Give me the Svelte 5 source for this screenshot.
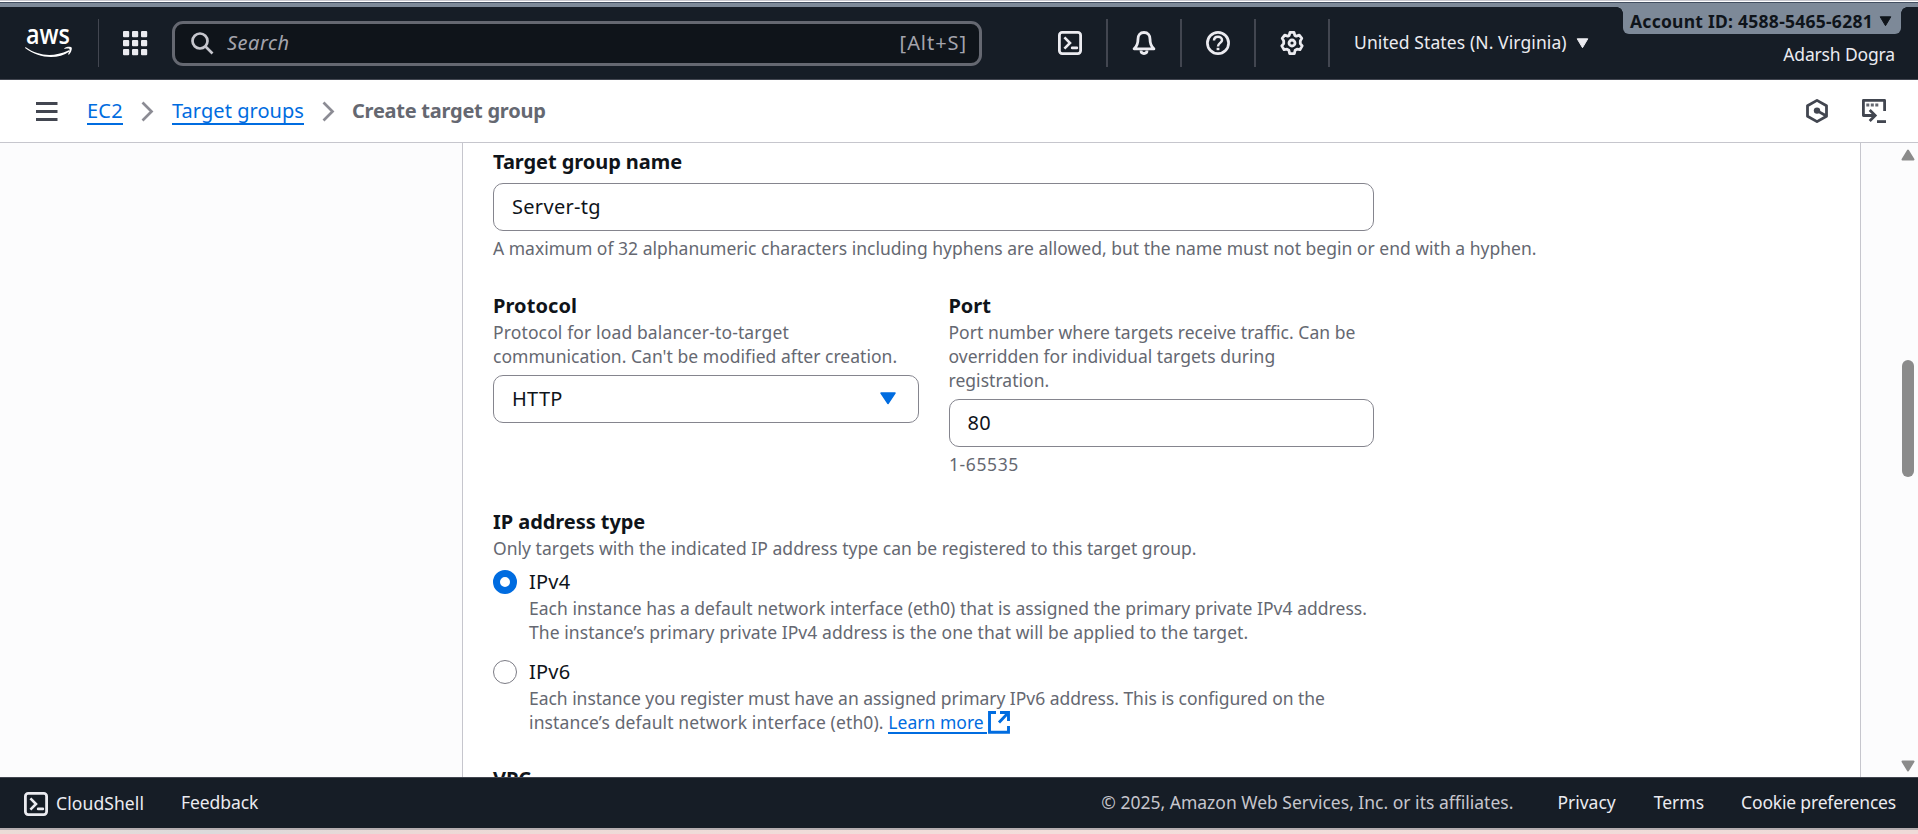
<script>
  let groupName = $state('Server-tg');
  let port = $state('80');
  let ipType = $state('ipv4');
  const dots = [0, 9, 18];
</script>

{#snippet shellIcon()}
  <svg class="icon" width="24" height="24" viewBox="0 0 24 24" fill="none" stroke="#ebebf0" stroke-width="2.8">
    <rect x="1.4" y="1.4" width="21.2" height="21.2" rx="2.8" />
    <path d="M6.4 6.4 12 12l-5.600 5.600" stroke-width="2.600" />
    <path d="M14.200 16.900h4.600" stroke-width="2.800" stroke-linecap="round" />
  </svg>
{/snippet}

<div class="page">
  <div class="edge"></div>
  <header>
    <svg class="logo" width="49" height="34" viewBox="0 0 49 34" fill="none">
      <text x="1" y="16.700" textLength="44" lengthAdjust="spacingAndGlyphs" class="logo-text">aws</text>
      <path d="M.8 20.200c13 9.200 28 10 42.500 3.200.9-.4 1.600.6.8 1.300C33.500 32.500 14 32 .4 21.300c-.6-.6-.1-1.300.4-1.100Z" fill="#fff" />
      <path d="M39.300 21.200c2.600-1.900 6.700-1.700 7.300-.8.700.9-.2 5-2.700 7.300l-.8-.4c.7-1.700 1.900-4.700 1.400-5.300-.5-.7-3.300-.4-5-.1Z" fill="#fff" />
    </svg>
    <span class="bar first"></span>
    <svg class="apps" width="24" height="24" viewBox="0 0 24 24" fill="#ebebf0">
      {#each dots as y}{#each dots as x}<rect {x} {y} width="6.200" height="6.200" rx="1" />{/each}{/each}
    </svg>
    <div class="search">
      <svg width="23" height="23" viewBox="0 0 23 23" fill="none" stroke="#c6c6cd" stroke-width="2.700">
        <circle cx="9" cy="9" r="7.500" /><path d="m14.500 14.500 7 7" />
      </svg>
      <span class="placeholder">Search</span>
      <span class="shortcut">[Alt+S]</span>
    </div>
    <div class="tools">
      <span class="tool">{@render shellIcon()}</span>
      <span class="bar"></span>
      <span class="tool">
        <svg width="24" height="24" viewBox="0 0 24 24" fill="none" stroke="#ebebf0" stroke-width="2.800" stroke-linejoin="round">
          <path d="M12 1.500c-4 0-6 2.900-6 6.500 0 5-1.200 7.500-3.900 9.900h19.800C19.200 15.500 18 13 18 8c0-3.600-2-6.500-6-6.500Z" />
          <path d="M9 19.500c0 1.700 1.300 3 3 3s3-1.300 3-3" />
        </svg>
      </span>
      <span class="bar"></span>
      <span class="tool">
        <svg width="24" height="24" viewBox="0 0 24 24" fill="none" stroke="#ebebf0" stroke-width="2.700">
          <circle cx="12" cy="12" r="10.600" />
          <path d="M8 9.600c0-2.400 1.700-3.900 4-3.900s4 1.500 4 3.500c0 2.600-4 2.900-4 6.200" stroke-width="2.500" />
          <path d="M12 16.800v2.400" stroke-width="2.800" />
        </svg>
      </span>
      <span class="bar"></span>
      <span class="tool">
        <svg width="24" height="24" viewBox="0 0 24 24" fill="none" stroke="#ebebf0" stroke-width="2.800" stroke-linejoin="round">
          <path d="M10 1.400h4l.8 3 1.500.8 3-1 2.500 3.200-1.500 2.500v2.700l1.900 2.300-2.300 3.800-2.900-.5-1.800 1-.9 3.400H9.700l-.9-3.400-1.800-1-2.900.5-2.300-3.800 1.900-2.300V9.900L2.200 7.400l2.500-3.200 3 1 1.500-.8Z" />
          <circle cx="12" cy="12" r="3" />
        </svg>
      </span>
      <span class="bar"></span>
    </div>
    <span class="region">United States (N. Virginia)</span>
    <svg class="region-caret" width="13" height="11" viewBox="0 0 13 11"><path d="M1.200.8h10.600L6.500 9.700Z" fill="#ebebf0" stroke="#ebebf0" stroke-linejoin="round" /></svg>
    <div class="account">
      <div class="badge">
        <span>Account ID: 4588-5465-6281</span>
        <svg width="13" height="11" viewBox="0 0 13 11"><path d="M1.200.8h10.600L6.500 9.700Z" fill="#0f141a" stroke="#0f141a" stroke-linejoin="round" /></svg>
      </div>
      <span class="user">Adarsh Dogra</span>
    </div>
  </header>

  <nav>
    <svg class="menu" width="22" height="20" viewBox="0 0 22 20"><path d="M0 1.500h21.500M0 9.500h21.500M0 17.500h21.500" stroke="#424650" stroke-width="2.800" /></svg>
    <a class="ec2" href="#ec2">EC2</a>
    <svg class="sep" width="13" height="21" viewBox="0 0 13 21"><path d="M1.500 1.500 10.500 10.500l-9 9" fill="none" stroke="#8c8c94" stroke-width="2.700" /></svg>
    <a class="tg" href="#tg">Target groups</a>
    <svg class="sep" width="13" height="21" viewBox="0 0 13 21"><path d="M1.500 1.500 10.500 10.500l-9 9" fill="none" stroke="#8c8c94" stroke-width="2.700" /></svg>
    <strong>Create target group</strong>
    <svg class="hex" width="24" height="26" viewBox="0 0 24 26" fill="none" stroke="#424650" stroke-width="2.800">
      <path d="M12 2.400 21.500 7.800v10.400L12 23.600 2.500 18.200V7.800Z" stroke-linejoin="round" />
      <circle cx="12" cy="12.600" r="3.200" fill="#424650" stroke="none" />
      <path d="m12 12.600 9 5.200" />
    </svg>
    <svg class="panel-icon" width="24" height="24" viewBox="0 0 24 24" fill="none" stroke="#424650" stroke-width="2.800">
      <path d="M22.600 12V1.400H1.400v15.100h11" stroke-linejoin="round" />
      <path d="m7.700 11 5.500 5.500-5.500 5.500" />
      <path d="M15 22.600h9" />
      <path d="M4.300 6h3M8.800 6h3M13.300 6h3" stroke="#656871" stroke-width="3" />
    </svg>
  </nav>

  <main>
    <section>
      <form>
        <label class="label" for="name">Target group name</label>
        <input id="name" class="name-input" bind:value={groupName} />
        <p class="hint name-hint">A maximum of 32 alphanumeric characters including hyphens are allowed, but the name must not begin or end with a hyphen.</p>

        <div class="columns">
          <div>
            <span class="label protocol">Protocol</span>
            <p class="desc"><span class="loose">Protocol for load balancer-to-target</span><br />communication. Can't be modified after creation.</p>
            <div class="select">
              <span>HTTP</span>
              <svg width="16" height="13" viewBox="0 0 16 13"><path d="M1 1h14L8 11.500Z" fill="#006ce0" stroke="#006ce0" stroke-width="1.500" stroke-linejoin="round" /></svg>
            </div>
          </div>
          <div>
            <label class="label" for="port">Port</label>
            <p class="desc">Port number where targets receive traffic. Can be<br />overridden for individual targets during<br />registration.</p>
            <input id="port" bind:value={port} />
            <p class="hint range">1-65535</p>
          </div>
        </div>

        <span class="label">IP address type</span>
        <p class="desc">Only targets with the indicated IP address type can be registered to this target group.</p>
        <div class="option first-option">
          <input type="radio" value="ipv4" bind:group={ipType} aria-label="IPv4" />
          <div>
            <span class="option-name">IPv4</span>
            <p>Each instance has a default network interface (eth0) that is assigned the primary private IPv4 address.<br /><span class="relaxed">The instance’s primary private IPv4 address is the one that will be applied to the target.</span></p>
          </div>
        </div>
        <div class="option">
          <input type="radio" value="ipv6" bind:group={ipType} aria-label="IPv6" />
          <div>
            <span class="option-name">IPv6</span>
            <p><span class="tight">Each instance you register must have an assigned primary IPv6 address. This is configured on the</span><br /><span class="loose">instance’s default network interface (eth0).</span> <a class="learn" href="#learn">Learn more</a><svg class="external" width="22" height="23" viewBox="0 0 22 23" fill="none" stroke="#006ce0" stroke-width="2.900"><path d="M8 1.500H1.500v19.800h19V15" /><path d="M12 1.500h8.500V10M20.500 1.500 11 11.500" /></svg></p>
          </div>
        </div>
        <span class="label vpc">VPC</span>
      </form>
    </section>
    <aside>
      <svg width="14" height="12" viewBox="0 0 14 12"><path d="M7 1.500 12.500 10.500H1.500Z" fill="#8b8b8b" stroke="#8b8b8b" stroke-width="2" stroke-linejoin="round" /></svg>
      <span class="thumb"></span>
      <svg class="down" width="14" height="12" viewBox="0 0 14 12"><path d="M7 10.500 12.500 1.500H1.500Z" fill="#8b8b8b" stroke="#8b8b8b" stroke-width="2" stroke-linejoin="round" /></svg>
    </aside>
  </main>

  <footer>
    {@render shellIcon()}
    <span class="shell">CloudShell</span>
    <span class="feedback">Feedback</span>
    <span class="copyright">© 2025, Amazon Web Services, Inc. or its affiliates.</span>
    <span class="privacy">Privacy</span>
    <span class="terms">Terms</span>
    <span class="cookies">Cookie preferences</span>
  </footer>
  <div class="desk"></div>
</div>

<style>
  :global(body) { overflow: hidden; background: #fff; }
  * { box-sizing: border-box; }
  svg { display: block; flex: none; overflow: visible; }
  p { margin: 0; }
  a { color: #006ce0; text-decoration: none; }
  span, strong, a { white-space: nowrap; }

  .page {
    display: flex; flex-direction: column; height: 834px; width: 1918px; overflow: hidden;
    font: 17.5px/24px "Noto Sans", "Open Sans", sans-serif; color: #0f141a;
  }
  .edge {
    flex: none; height: 7px;
    background: linear-gradient(#c6c6cd 0 1px, #fff 1px 2px, #424e60 2px 3px, #7d8998 3px);
  }

  header {
    flex: none; height: 73px; display: flex; align-items: flex-start;
    background: #161d26; border-bottom: 1px solid #424650; color: #ebebf0;
  }
  .logo { margin: 20px 0 0 25px; }
  .logo-text { font: 600 27px "Open Sans", sans-serif; fill: #fff; }
  .bar { flex: none; width: 2px; height: 48px; margin-top: 12px; background: #424650; }
  .bar.first { margin-left: 24px; width: 1px; }
  .apps { margin: 24px 0 0 24px; }
  .search {
    margin: 14px 0 0 25px; width: 810px; height: 45px; padding: 0 13px 0 16px;
    display: flex; align-items: center; border: 3px solid #656871; border-radius: 11px;
    background: #0f141a; color: #a4a4ad; font-size: 20px;
  }
  .search span { padding-bottom: 2px; }
  .placeholder { margin-left: 13px; font-style: italic; letter-spacing: .5px; }
  .shortcut { margin-left: auto; letter-spacing: .95px; margin-right: -1px; }
  .tools { display: flex; margin-left: 52px; width: 296px; }
  .tool { width: 73px; padding: 24px 0 0 24px; }
  .region { margin: 23px 0 0 24px; letter-spacing: .1px; }
  .region-caret { margin: 31px 0 0 9px; }
  .account { margin-left: auto; width: 295px; padding-right: 17px; display: flex; flex-direction: column; }
  .badge {
    position: relative; height: 27px; padding: 1px 9px 0 7px; display: flex; align-items: center; justify-content: space-between;
    background: #7d8998; color: #0f141a; font-weight: 700; border-radius: 0 0 6px 6px; letter-spacing: .25px;
  }
  .badge::before, .badge::after { content: ""; position: absolute; top: 0; width: 6px; height: 6px; }
  .badge::before { left: -6px; background: radial-gradient(circle at 0 100%, #161d26 5.500px, #7d8998 6px); }
  .badge::after { right: -6px; background: radial-gradient(circle at 100% 100%, #161d26 5.500px, #7d8998 6px); }
  .badge svg { margin-top: 1px; }
  .user { align-self: flex-end; margin: 8px 6px 0 0; letter-spacing: -.15px; }

  nav {
    flex: none; height: 63px; display: flex; align-items: flex-start;
    border-bottom: 1px solid #c6c6cd; font-size: 20px; line-height: 28px;
  }
  nav a { border-bottom: 2px solid #006ce0; height: 28px; }
  nav a, nav strong { margin-top: 17px; }
  .menu { margin: 22px 0 0 36px; }
  .ec2 { margin-left: 29px; width: 36px; letter-spacing: .2px; }
  .sep { margin: 21px 0 0 18px; }
  .tg { margin-left: 18px; width: 132px; letter-spacing: .05px; }
  nav strong { margin-left: 17px; color: #656871; letter-spacing: -.25px; }
  .hex { margin: 18px 0 0 auto; }
  .panel-icon { margin: 19px 32px 0 33px; }

  main { flex: none; height: 634px; display: flex; background: #fcfcfd; }
  section {
    margin-left: 462px; width: 1399px; overflow: hidden; background: #fff;
    border-left: 1px solid #c6c6cd; border-right: 1px solid #c6c6cd;
  }
  form { padding: 6px 0 0 30px; width: 1200px; }
  .label { display: block; height: 25px; font-weight: 700; font-size: 20px; line-height: 25px; letter-spacing: -.06px; }
  .protocol { letter-spacing: .08px; }
  .desc, .hint, .option p { color: #656871; letter-spacing: .03px; white-space: nowrap; }
  .name-hint { letter-spacing: .01px; }
  .loose { letter-spacing: .13px; }
  .relaxed { letter-spacing: .07px; }
  .tight { letter-spacing: -.035px; }
  .desc { margin: 2px 0 7px; }
  input:not([type="radio"]), .select {
    display: flex; align-items: center; width: 100%; height: 48px; padding: 0 18px 2px; outline: 0;
    border: 1px solid #85858e; border-radius: 10px; background: #fff; color: #0f141a;
    font: 20px "Noto Sans", sans-serif; letter-spacing: .3px;
  }
  .select svg { margin: 1px 4px 0 auto; }
  input.name-input { width: 881px; margin-top: 9px; }
  .hint { margin-top: 5px; }
  .hint.range { letter-spacing: .6px; padding-left: .5px; }
  .columns { display: grid; grid-template-columns: 1fr 1fr; gap: 30px; width: 881px; margin: 33px 0; }
  .option { display: flex; gap: 12px; margin-top: 15px; }
  .first-option { margin-top: 9px; }
  input[type="radio"] {
    appearance: none; flex: none; width: 24px; height: 24px; margin: 1px 0 0; border: 1px solid #7c7c85; border-radius: 50%; background: #fff;
  }
  input[type="radio"]:checked { border: 7px solid #006ce0; }
  .option-name { display: block; font-size: 20px; height: 27px; padding-top: 1px; letter-spacing: .2px; }
  .learn { display: inline-block; height: 24px; border-bottom: 2px solid #006ce0; width: 99px; vertical-align: top; }
  .external { display: inline-block; margin: 1px 0 -2px 1px; vertical-align: top; }
  .vpc { margin-top: 32px; }

  aside { flex: 1; display: flex; flex-direction: column; align-items: flex-start; padding: 6px 0 5px 40px; }
  .thumb { width: 12px; height: 117px; margin: 199px 0 0 1px; border-radius: 6px; background: #8b8b8b; }
  .down { margin-top: auto; }

  footer {
    flex: none; height: 51px; display: flex; align-items: flex-start; padding: 14px 22px 0 24px;
    background: #161d26; border-top: 1px solid #424650; color: #ebebf0;
  }
  footer span { margin-top: -2px; }
  footer .shell { margin: -1px 0 0 8px; letter-spacing: .1px; }
  .feedback { margin-left: 37px; letter-spacing: -.1px; }
  .copyright { margin-left: auto; color: #c6c6cd; }
  .privacy { margin-left: 44px; }
  .terms { margin-left: 38px; }
  .cookies { margin-left: 37px; letter-spacing: -.18px; }
  .desk {
    flex: 1; border-top: 2px solid #b5aeb0;
    background: linear-gradient(90deg, #ecdcd7, #dcdadb 11%, #ecd9d6 22%, #f3dedb 55%, #efdad8);
  }
</style>
